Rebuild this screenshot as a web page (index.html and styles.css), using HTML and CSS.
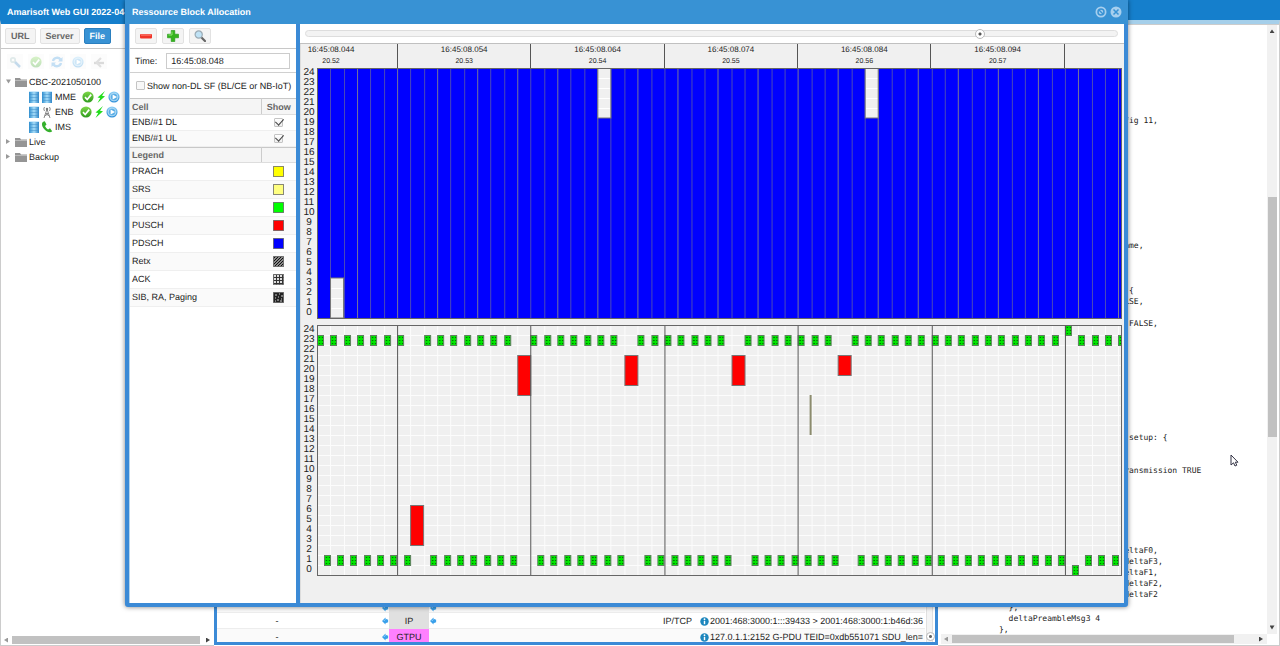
FILE: index.html
```html
<!DOCTYPE html>
<html lang="en">
<head>
<meta charset="utf-8">
<title>Amarisoft Web GUI</title>
<link rel="stylesheet" href="styles.css">
</head>
<body>
<svg class="sprite" aria-hidden="true">
  <defs>
    <linearGradient id="steel" x1="0" x2="1" y1="0" y2="0"><stop offset="0" stop-color="#2f8fd0"/><stop offset=".5" stop-color="#a6dcf8"/><stop offset="1" stop-color="#2f86c8"/></linearGradient>
    <linearGradient id="sky" x1="0" x2="0" y1="0" y2="1"><stop offset="0" stop-color="#8cd0f8"/><stop offset="1" stop-color="#2d8fd8"/></linearGradient>
    <linearGradient id="leaf" x1="0" x2="0" y1="0" y2="1"><stop offset="0" stop-color="#7fd84a"/><stop offset="1" stop-color="#2c9a1c"/></linearGradient>
    <pattern id="p-retx" width="3" height="3" patternUnits="userSpaceOnUse"><rect width="3" height="3" fill="#888"/><path d="M-1 1L1-1M0 3L3 0M2 4L4 2" stroke="#111" stroke-width="1"/></pattern>
    <pattern id="p-ack" x="1" y="1" width="3" height="3" patternUnits="userSpaceOnUse"><rect width="3" height="3" fill="#333"/><rect width="2" height="2" fill="#ddd"/></pattern>
    <pattern id="p-green" x="1" y="1" width="3" height="3" patternUnits="userSpaceOnUse"><rect width="3" height="3" fill="#00e600"/><rect x="1" y="1" width="1" height="1" fill="#003800"/></pattern>
  </defs>
  <symbol id="i-server" viewBox="0 0 12 12"><rect x="1" y="0" width="10" height="12" fill="url(#steel)"/><path d="M1 3.5H11M1 6.5H11M1 9.5H11" stroke="#3f8fcb" stroke-width=".5"/><path d="M1 .5H11" stroke="#cdeafc"/></symbol>
  <symbol id="i-check" viewBox="0 0 12 12"><circle cx="6" cy="6" r="5.6" fill="url(#leaf)"/><path d="M3 6.2L5.2 8.5L9.2 3.6" fill="none" stroke="#fff" stroke-width="1.7"/></symbol>
  <symbol id="i-play" viewBox="0 0 12 12"><circle cx="6" cy="6" r="5.6" fill="url(#sky)"/><circle cx="6" cy="6" r="3.9" fill="#5aaee6" stroke="#c9e6f8" stroke-width=".8"/><path d="M4.6 3.4L9 6L4.6 8.6Z" fill="#fff"/></symbol>
  <symbol id="i-bolt" viewBox="0 0 12 12"><path d="M10 0L2.500 6.500L5.200 7L2.500 12L10 5.300L7 4.800Z" fill="#22dd1c"/></symbol>
  <symbol id="i-phone" viewBox="0 0 12 12"><path d="M2.2.8C.2 2 .8 5.500 3.300 8.300C6 11.200 9.300 12.300 11.200 10.200L9 7.200L7.200 8.400C6 8 4.400 6.200 4.100 4.900L5.500 3.500L3.800.3Z" fill="#35b02c"/></symbol>
  <symbol id="i-tower" viewBox="0 0 12 12"><path d="M6 3L3 12M6 3L9 12M4.500 7.500H7.500M3.700 10L7.500 7.500M8.300 10L4.500 7.500M3.500 1Q2 3 3.500 5M8.500 1Q10 3 8.500 5" fill="none" stroke="#8a8a8a" stroke-width="1"/><circle cx="6" cy="3" r="1.200" fill="#777"/></symbol>
  <symbol id="i-folder" viewBox="0 0 12 10"><path d="M0 1H5L6 2.500H12V10H0Z" fill="#959595"/><path d="M0 3.500H12" stroke="#c4c4c4" stroke-width=".8"/></symbol>
  <symbol id="i-wrench" viewBox="0 0 12 12"><circle cx="4" cy="4" r="2.200" fill="none" stroke="#9bb" stroke-width="1.800"/><path d="M6 6L11 11" stroke="#3e86c0" stroke-width="2.500"/></symbol>
  <symbol id="i-sync" viewBox="0 0 12 12"><path d="M2 5A4.200 4.200 0 0 1 9.500 3.500M10 7A4.200 4.200 0 0 1 2.500 8.500" fill="none" stroke="#3c96dc" stroke-width="2.400"/><path d="M11.500 1V5.500H7ZM.5 11V6.500H5Z" fill="#3c96dc"/></symbol>
  <symbol id="i-plug" viewBox="0 0 12 12"><path d="M1 7H11" stroke="#888" stroke-width="2.400"/><path d="M8 2L3.500 6.500L8 11" stroke="#999" stroke-width="2.200" fill="none"/></symbol>
  <symbol id="i-minus" viewBox="0 0 12 12"><rect x="0" y="4" width="12" height="4.500" rx="1" fill="#f03428"/><path d="M1 5H11" stroke="#ff8d80"/></symbol>
  <symbol id="i-plus" viewBox="0 0 12 12"><path d="M4.200.5H7.800V4.200H11.500V7.800H7.800V11.500H4.200V7.800H.5V4.200H4.200Z" fill="#35b41e" stroke="#1f9310" stroke-width=".6"/><path d="M5 1.500V5H1.500" stroke="#8be66c" fill="none"/></symbol>
  <symbol id="i-zoom" viewBox="0 0 12 12"><path d="M7.500 7.500L11 11" stroke="#666" stroke-width="2.200" stroke-linecap="round"/><circle cx="4.700" cy="4.500" r="3.600" fill="#bfe2f5" stroke="#9aaab4" stroke-width="1.200"/></symbol>
  <symbol id="i-gem" viewBox="0 0 8 8"><path d="M0 4L4 0V1.500L7 2.500V5.500L4 6.500V8Z" fill="#3aa0ea"/><path d="M2 4L4 2" stroke="#a4dbff"/></symbol>
  <symbol id="i-info" viewBox="0 0 10 10"><circle cx="5" cy="5" r="4.700" fill="#1c86bd"/><path d="M5 4.300V8" stroke="#fff" stroke-width="1.600"/><circle cx="5" cy="2.500" r="1" fill="#fff"/></symbol>
</svg>

<header class="app-header"><h1>Amarisoft Web GUI 2022-04-05</h1></header>

<main class="desk">
  <nav class="sources">
    <div class="bar tabs">
      <button class="btn">URL</button><button class="btn">Server</button><button class="btn active">File</button>
    </div>
    <div class="tools">
      <button disabled aria-label="Settings"><svg><use href="#i-wrench"/></svg></button>
      <button disabled aria-label="Enable"><svg><use href="#i-check"/></svg></button>
      <button disabled aria-label="Refresh"><svg><use href="#i-sync"/></svg></button>
      <button disabled aria-label="Play"><svg><use href="#i-play"/></svg></button>
      <button disabled aria-label="Connect"><svg><use href="#i-plug"/></svg></button>
    </div>
    <ul class="tree">
      <li><i class="arrow open"></i><svg class="folder"><use href="#i-folder"/></svg><span>CBC-2021050100</span></li>
      <li class="child"><svg><use href="#i-server"/></svg><svg><use href="#i-server"/></svg><span>MME</span><svg class="first"><use href="#i-check"/></svg><svg><use href="#i-bolt"/></svg><svg><use href="#i-play"/></svg></li>
      <li class="child"><svg><use href="#i-server"/></svg><svg><use href="#i-tower"/></svg><span>ENB</span><svg class="first"><use href="#i-check"/></svg><svg><use href="#i-bolt"/></svg><svg><use href="#i-play"/></svg></li>
      <li class="child"><svg><use href="#i-server"/></svg><svg><use href="#i-phone"/></svg><span>IMS</span></li>
      <li><i class="arrow"></i><svg class="folder"><use href="#i-folder"/></svg><span>Live</span></li>
      <li><i class="arrow"></i><svg class="folder"><use href="#i-folder"/></svg><span>Backup</span></li>
    </ul>
    <div class="hscroll"><i class="arrow left"></i><b class="thumb"></b><i class="arrow dark"></i></div>
  </nav>

  <section class="logs">
    <div class="log-body">
      <table>
        <colgroup><col class="c-dash"><col class="c-gem"><col class="c-proto"><col class="c-gem"><col><col class="c-msg"></colgroup>
        <tr><td></td><td><svg><use href="#i-gem"/></svg></td><td class="ip"></td><td><svg><use href="#i-gem"/></svg></td><td></td><td class="msg"></td></tr>
        <tr><td>-</td><td><svg><use href="#i-gem"/></svg></td><td class="ip">IP</td><td><svg><use href="#i-gem"/></svg></td><td class="kind">IP/TCP</td><td class="msg"><svg class="info"><use href="#i-info"/></svg>2001:468:3000:1:::39433 &gt; 2001:468:3000:1:b46d:36</td></tr>
        <tr><td>-</td><td><svg><use href="#i-gem"/></svg></td><td class="gtpu">GTPU</td><td></td><td></td><td class="msg"><svg class="info"><use href="#i-info"/></svg>127.0.1.1:2152 G-PDU TEID=0xdb551071 SDU_len=</td></tr>
      </table>
      <div class="vtrack"><i class="knob"></i></div>
    </div>
  </section>

  <aside class="detail">
    <div class="code">
<pre class="a">                                     fig 11,</pre>
<pre class="b">                                     ame,</pre>
<pre class="c">                                      {
                                   FALSE,

                                      FALSE,</pre>
<pre class="d">                                      setup: {


                                    transmission TRUE</pre>
<pre class="e">                                    deltaF0,
                                     deltaF3,
                                    deltaF1,
                                     deltaF2,
                                     deltaF2</pre>
<pre class="f">             },
             deltaPreambleMsg3 4
           },</pre>
    </div>
    <div class="vscroll"><i class="arrow up"></i><b class="thumb"></b><i class="arrow open dark"></i></div>
    <div class="hscroll"><i class="arrow left"></i><b class="thumb"></b><i class="arrow dark"></i></div>
  </aside>
</main>

<section class="window" role="dialog" aria-labelledby="wtitle">
  <header class="window-title">
    <h2 id="wtitle">Ressource Block Allocation</h2>
    <button aria-label="Restore"><svg viewBox="0 0 12 12"><circle cx="6" cy="6" r="5.500"/><circle class="ring" cx="6" cy="6" r="3"/><path d="M4 4L8 8"/></svg></button>
    <button aria-label="Close"><svg viewBox="0 0 12 12"><circle cx="6" cy="6" r="5.500"/><path d="M3.500 3.500L8.500 8.500M8.500 3.500L3.500 8.500"/></svg></button>
  </header>
  <div class="window-body">
    <div class="settings">
      <div class="bar icons">
        <button class="btn" aria-label="Zoom out"><svg><use href="#i-minus"/></svg></button>
        <button class="btn" aria-label="Zoom in"><svg><use href="#i-plus"/></svg></button>
        <button class="btn" aria-label="Search"><svg><use href="#i-zoom"/></svg></button>
      </div>
      <div class="time"><label for="time">Time:</label><input id="time" type="text" value="16:45:08.048"></div>
      <div class="option"><input id="nondl" type="checkbox"><label for="nondl">Show non-DL SF (BL/CE or NB-IoT)</label></div>
      <table class="list cells">
        <thead><tr><th>Cell</th><th class="show">Show</th></tr></thead>
        <tbody>
          <tr><td><label for="dl">ENB/#1 DL</label></td><td class="show"><input id="dl" type="checkbox" checked></td></tr>
          <tr><td><label for="ul">ENB/#1 UL</label></td><td class="show"><input id="ul" type="checkbox" checked></td></tr>
        </tbody>
      </table>
      <table class="list legend">
        <thead><tr><th>Legend</th><th class="show"></th></tr></thead>
        <tbody>
          <tr><td>PRACH</td><td class="show"><svg><rect fill="#ffff00"/></svg></td></tr>
          <tr><td>SRS</td><td class="show"><svg><rect fill="#ffff80"/></svg></td></tr>
          <tr><td>PUCCH</td><td class="show"><svg><rect fill="#00ff00"/></svg></td></tr>
          <tr><td>PUSCH</td><td class="show"><svg><rect fill="#ff0000"/></svg></td></tr>
          <tr><td>PDSCH</td><td class="show"><svg><rect fill="#0000ff"/></svg></td></tr>
          <tr><td>Retx</td><td class="show"><svg><rect fill="url(#p-retx)"/></svg></td></tr>
          <tr><td>ACK</td><td class="show"><svg><rect fill="url(#p-ack)"/></svg></td></tr>
          <tr><td>SIB, RA, Paging</td><td class="show"><svg><rect fill="#222"/><path d="M2 3H4M6 2H7M8 4H10M2 6H3M5 5H6M4 8H6M8 7H9M2 9H3M7 9H9" stroke="#ccc"/></svg></td></tr>
        </tbody>
      </table>
    </div>
    <div class="view">
      <div class="seek"><input type="range" min="0" max="1000" value="835" aria-label="Position"></div>
      <div class="chart">
        <div class="timeline">
          <div><b>16:45:08.044</b><span>20.52</span></div>
          <div><b>16:45:08.054</b><span>20.53</span></div>
          <div><b>16:45:08.064</b><span>20.54</span></div>
          <div><b>16:45:08.074</b><span>20.55</span></div>
          <div><b>16:45:08.084</b><span>20.56</span></div>
          <div><b>16:45:08.094</b><span>20.57</span></div>
          <div></div>
        </div>
        <div class="plot"><ol></ol><svg id="downlink" viewBox="0 0 804 251" preserveAspectRatio="none"></svg></div>
        <div class="plot"><ol></ol><svg id="uplink" viewBox="0 0 804 251" preserveAspectRatio="none"></svg></div>
      </div>
    </div>
  </div>
</section>
<svg class="pointer" viewBox="0 0 9 13"><path d="M1 1V11L3.500 8.800L5 12L6.800 11.200L5.300 8.200H8Z" fill="#fff" stroke="#334" stroke-width="1"/></svg>
<script src="chart.js"></script>
</body>
</html>
```
FILE: styles.css
```css
* { box-sizing: border-box; }
body { margin: 0; height: 100vh; display: flex; flex-direction: column; overflow: hidden; position: relative; background: #fff; color: #222; font: 9px/12px "Liberation Sans", Arial, sans-serif; text-rendering: geometricPrecision; }
h1, h2 { margin: 0; font-size: 9px; font-weight: bold; color: #fff; white-space: nowrap; }
button, input { font: inherit; color: inherit; margin: 0; text-rendering: inherit; }
table { border-collapse: collapse; table-layout: fixed; width: 100%; }
td, th { padding: 0; }
.sprite { position: absolute; width: 0; height: 0; }

.app-header { flex: none; height: 20px; padding: 6px 7px 0; background: #157fcc; }
.desk { flex: 1; min-height: 0; display: flex; }
.sources { flex: none; width: 214px; display: flex; flex-direction: column; border-top: 4px solid #157fcc; border-left: 1px solid #ccc; border-bottom: 1px solid #ccc; }
.bar { flex: none; display: flex; align-items: center; gap: 5px; height: 25px; padding: 0 4px; border-bottom: 1px solid #c8c8c8; }
.btn { height: 16px; padding: 0 5px; border: 1px solid #e2e2e2; border-radius: 2px; background: #f4f4f4; color: #666; font-weight: bold; line-height: 12px; }
.btn.active { background: #3892d4; border-color: #2a7fbf; color: #fff; }
.tabs { gap: 4px; }
.tools { display: flex; gap: 5px; padding: 5px 6px 0; height: 25px; }
.tools button { width: 16px; height: 15px; padding: 1px; border: 0; background: #f8f8f8; opacity: .3; }
.tools svg { display: block; width: 12px; height: 12px; margin: auto; }
.tree { flex: 1; margin: 0; padding: 0; list-style: none; }
.tree li { display: flex; align-items: center; height: 15px; padding-left: 5px; }
.tree li.child { padding-left: 27px; gap: 1px; }
.tree li svg { width: 12px; height: 12px; }
.tree li svg.folder { height: 10px; margin: 0 1px 0 4px; }
.tree li svg.first { margin-left: 5px; }
.tree span { margin-left: 1px; }
.arrow { width: 5px; height: 5px; flex: none; background: #999; clip-path: polygon(0 0, 80% 50%, 0 100%); }
.arrow.open { clip-path: polygon(0 10%, 100% 10%, 50% 90%); }
.arrow.up { clip-path: polygon(0 80%, 100% 80%, 50% 10%); background: #444; }
.arrow.left { clip-path: polygon(80% 0, 0 50%, 80% 100%); }
.arrow.dark { background: #444; }
.hscroll { display: flex; align-items: center; height: 10px; background: #f1f1f1; padding: 0 3px; gap: 3px; justify-content: space-between; }
.sources .hscroll { background: #fff; }
.hscroll .thumb { height: 8px; width: 91%; background: #c1c1c1; margin-right: auto; }

.logs { flex: 1; min-width: 0; display: flex; flex-direction: column; justify-content: flex-end; border: 3px solid #3b8ad6; border-top: 0; margin-bottom: 1px; }
.log-body { display: flex; height: 38px; overflow: hidden; align-items: flex-end; }
.log-body table { flex: 1; align-self: flex-start; width: 0; }
.log-body tr { height: 16px; }
.log-body tr:first-child { height: 8px; }
.log-body tr:nth-child(odd) { background: #fafafa; }
.log-body td { text-align: center; white-space: nowrap; overflow: hidden; height: 16px; border-bottom: 1px solid #ededed; }
.log-body tr:first-child td { height: 8px; font-size: 0; line-height: 0; }
.log-body svg { width: 7px; height: 8px; vertical-align: middle; }
.log-body .msg svg { width: 9px; height: 9px; margin-right: 1px; }
.log-body td.kind { text-align: right; }
.log-body td.msg { text-align: left; padding-left: 8px; }
.log-body td.ip { background: #e0e0e0; border-color: #e0e0e0; }
.log-body td.gtpu { background: #ff80ff; border-color: #ff80ff; }
.c-dash { width: 164px; }
.log-body td:first-child { padding-right: 44px; }
.c-gem { width: 8px; }
.c-proto { width: 40px; }
.c-msg { width: 233px; }
.vtrack { width: 10px; align-self: stretch; display: flex; flex-direction: column; justify-content: flex-end; align-items: center; padding-bottom: 1px; background: linear-gradient(90deg, #fff 1px, #e0e0e0 1px 2px, #f4f4f4 2px 7px, #e0e0e0 7px 8px, #fff 8px); }
.knob { width: 9px; height: 9px; border: 1px solid #bbb; border-radius: 50%; background: radial-gradient(circle, #666 0 1px, #fff 2px); }

.detail { flex: none; width: 342px; display: grid; grid-template-columns: 1fr 10px; grid-template-rows: 1fr 10px; padding: 1px 2px 1px 3px; border-top: 4px solid #a5cfea; border-right: 1px solid #ccc; border-bottom: 1px solid #ccc; box-shadow: inset 0 1px #ccc; }
.code { padding: 90px 0 0 5px; overflow: hidden; min-height: 0; }
pre { margin: 0; font: 8px/11px "DejaVu Sans Mono", monospace; color: #222; }
pre.b { margin-top: 114px; }
pre.c { margin-top: 34px; }
pre.d { margin-top: 103px; }
pre.e { margin-top: 69px; }
pre.f { margin-top: 2px; }
.vscroll { background: #f1f1f1; display: flex; flex-direction: column; align-items: center; padding: 4px 0; }
.vscroll .thumb { width: 9px; height: 40%; margin: 163px 0 auto; background: #c1c1c1; }
.detail .hscroll .thumb { width: 88%; }

.window { position: absolute; top: 0; right: 152px; bottom: 39px; left: 125px; display: flex; flex-direction: column; background: #3b8ad6; padding: 0 4px 4px; border-radius: 0 0 3px 3px; box-shadow: 0 0 5px rgba(0, 0, 0, .5); }
.window-title { flex: none; display: flex; align-items: center; gap: 3px; height: 24px; margin: 0 -4px; padding: 0 6px 0 7px; background: #3892d4; }
.window-title h2 { margin-right: auto; padding-bottom: 1px; }
.window-title button { width: 12px; height: 12px; padding: 0; border: 0; background: none; }
.window-title svg { display: block; width: 12px; height: 12px; }
.window-title circle { fill: #a7cfee; }
.window-title path, .window-title .ring { fill: none; stroke: #3892d4; stroke-width: 1.5; }
.window-body { flex: 1; min-height: 0; display: flex; gap: 4px; }
.settings { flex: none; width: 167px; background: #fff; border-left: 1px solid #b5d4ec; }
.icons { padding: 0 5px; }
.icons .btn { width: 22px; padding: 0; }
.icons svg { display: block; width: 12px; height: 12px; margin: auto; }
.time { display: flex; align-items: center; gap: 9px; height: 24px; padding: 0 6px 0 5px; border-bottom: 1px solid #d0d0d0; }
.time input { flex: 1; min-width: 0; height: 16px; padding: 0 4px; border: 1px solid #ccc; }
.option { display: flex; align-items: center; gap: 2px; height: 25px; padding-left: 6px; white-space: nowrap; }
input[type=checkbox] { appearance: none; width: 9px; height: 9px; border: 1px solid #c4c4c4; border-radius: 1px; background: #f8f8f8; }
input[type=checkbox]:checked { background: #f6f6f6 linear-gradient(#fff, #eee); position: relative; }
input[type=checkbox]:checked::after { content: ""; position: absolute; left: 2px; top: -2px; width: 4px; height: 7px; border: solid #444; border-width: 0 1px 1px 0; transform: rotate(42deg); }
.list { border-top: 1px solid #c8c8c8; border-bottom: 1px solid #d8d8d8; }
.list th { height: 16px; padding-left: 2px; background: #f5f5f5; color: #666; text-align: left; border-bottom: 1px solid #ddd; }
.list td { height: 16px; padding: 0 0 1px 2px; border-bottom: 1px solid #efefef; }
.list th:first-child { border-right: 1px solid #ccc; }
.list .show { width: 35px; padding-left: 0; text-align: center; }
.list tr:nth-child(even) { background: #fafafa; }
.list input, .list svg { display: block; margin: auto; }
.legend th { height: 15px; }
.legend td { height: 18px; }
.legend svg { width: 11px; height: 11px; }
.legend rect { width: 10px; height: 10px; x: .5px; y: .5px; stroke: #555; stroke-opacity: .7; }

.view { flex: 1; min-width: 0; display: flex; flex-direction: column; background: #fff; }
.seek { flex: none; display: flex; align-items: center; height: 20px; padding: 0 6px 0 5px; border-bottom: 1px solid #c0c0c0; }
input[type=range] { appearance: none; flex: 1; height: 7px; border: 1px solid #ddd; border-radius: 4px; background: #f3f3f3; }
input[type=range]::-webkit-slider-thumb { appearance: none; width: 10px; height: 10px; border: 1px solid #bbb; border-radius: 50%; background: radial-gradient(circle, #555 0 1px, #fff 2px); }
.chart { flex: 1; background: #f0f0f0; border-left: 1px solid #ddd; padding-right: 2px; }
.timeline { display: grid; grid-template-columns: 97px repeat(5, 133fr) 57fr; height: 24px; text-align: center; }
.timeline div { border-right: 1px solid #555; }
.timeline div:first-child { padding-right: 36px; }
.timeline div:last-child { border: 0; }
.timeline b { display: block; font-size: 8px; font-weight: normal; }
.timeline span { display: block; font-size: 7px; }
.plot { display: flex; align-items: flex-start; margin-bottom: 6px; }
.plot ol { flex: none; width: 16px; margin: 0; padding: 0; list-style: none; font-size: 10px; line-height: 10px; text-align: center; }
.plot svg { flex: 1; min-width: 0; height: 251px; }

.pointer { position: absolute; left: 1230px; top: 454px; width: 9px; height: 13px; }
```
FILE: chart.js
```js
const SLOT = 13.34, ROW = 10, TOP_RB = 24, WIDTH = 804, HEIGHT = 250;
const FRAMES = [6, 16, 26, 36, 46, 56];

const rect = (x, y, w, h, attrs) =>
  `<rect x="${x}" y="${y}" width="${w}" height="${h}" ${attrs}/>`;
const line = (x1, y1, x2, y2, color) =>
  `<path d="M${x1} ${y1}L${x2} ${y2}" stroke="${color}"/>`;
const snap = v => Math.round(v) + 0.5;
const rowY = rb => (TOP_RB - rb) * ROW;

document.querySelectorAll('.plot ol').forEach(list => {
  for (let rb = TOP_RB; rb >= 0; rb--) {
    const item = document.createElement('li');
    item.textContent = rb;
    list.append(item);
  }
});

function downlink() {
  let out = rect(0, 0, WIDTH, HEIGHT, 'fill="#0000ff"');
  for (let s = 1; s * SLOT < WIDTH; s++) {
    out += line(snap(s * SLOT), 0, snap(s * SLOT), HEIGHT, s % 3 ? '#4a4ab8' : '#77779a');
  }
  [[1, 3, 4], [21, 24, 5], [41, 24, 5]].forEach(([slot, rb, count]) => {
    const x = snap(slot * SLOT);
    out += rect(x, rowY(rb), 13, count * ROW, 'fill="#f0f0f0" stroke="#777"');
    for (let i = 1; i < count; i++) {
      out += line(x + 1, rowY(rb) + i * ROW + 0.5, x + 12, rowY(rb) + i * ROW + 0.5, '#fff');
    }
  });
  return out + rect(0.5, 0.5, WIDTH - 1, HEIGHT, 'fill="none" stroke="#666"');
}

function uplink() {
  let out = '';
  for (let s = 1; s * SLOT < WIDTH; s++) out += line(snap(s * SLOT), 0, snap(s * SLOT), HEIGHT, '#fcfcfc');
  for (let r = 1; r < 25; r++) out += line(0, r * ROW + 0.5, WIDTH, r * ROW + 0.5, '#fcfcfc');
  const ack = (x, rb) => {
    out += `<g transform="translate(${Math.round(x)} ${rowY(rb)})">`
      + rect(0.5, 0.5, 6, 10, 'fill="url(#p-green)" stroke="#5f7f5f"') + '</g>';
  };
  const idle = [7, 15, 23, 31, 39];
  for (let s = 0; s <= 60; s++) {
    if (!idle.includes(s)) ack(s * SLOT, s === 56 ? 24 : 23);
    if (s < 60 && !idle.includes(s)) ack((s + 0.5) * SLOT, s === 56 ? 0 : 1);
  }
  [[7, 6, 4], [15, 21, 4], [23, 21, 3], [31, 21, 3], [39, 21, 2]].forEach(([slot, rb, count]) => {
    out += rect(snap(slot * SLOT), rowY(rb) + 0.5, 13, count * ROW, 'fill="#ff0000" stroke="#777"');
  });
  out += rect(492, 70, 2, 40, 'fill="#8c8c6e"');
  FRAMES.forEach(s => { out += line(snap(s * SLOT), 0, snap(s * SLOT), HEIGHT, '#555'); });
  return out + rect(0.5, 0.5, WIDTH - 1, HEIGHT, 'fill="none" stroke="#666"');
}

document.getElementById('downlink').innerHTML = downlink();
document.getElementById('uplink').innerHTML = uplink();
```
